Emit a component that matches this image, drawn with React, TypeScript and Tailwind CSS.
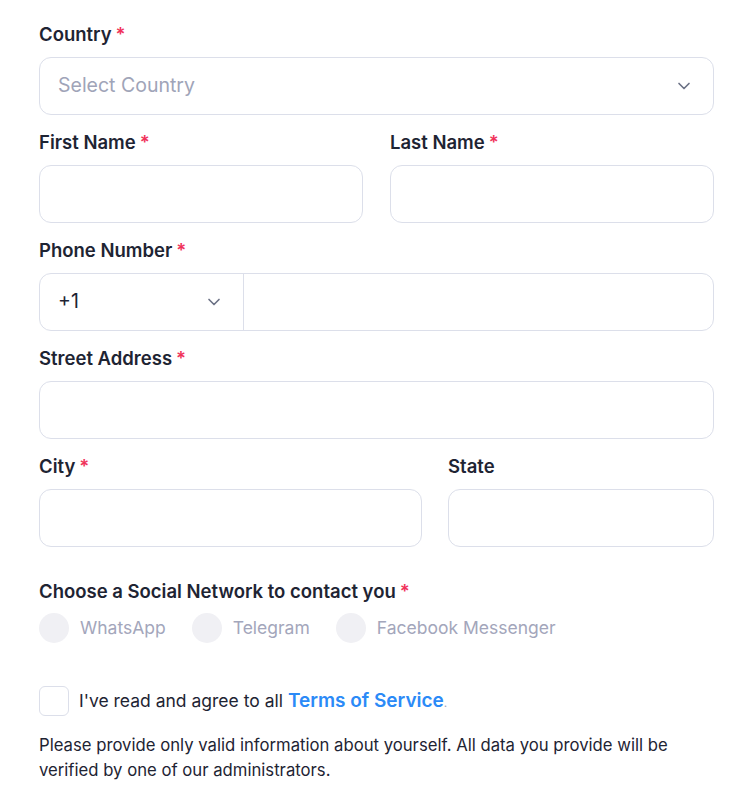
import { ChevronDown } from "lucide-react";

const font = { fontFamily: "Inter, 'Noto Sans', sans-serif" };

function Label({ text, required = true }: { text: string; required?: boolean }) {
  return (
    <div className="mb-[11px] text-[18.5px] leading-6 font-semibold text-[#1e2433]">
      {text}
      {required ? <span className="ml-1 text-[#f0325a]">*</span> : null}
    </div>
  );
}

function Box({ className = "" }: { className?: string }) {
  return <div className={"h-[58px] rounded-xl border border-[#dcdfea] bg-white " + className} />;
}

export default function App() {
  return (
    <div className="bg-white pl-[39px] pr-[34px] pt-[22px] pb-4 text-[#1e2433]" style={font}>
      {/* Country */}
      <div className="mb-[15px]">
        <Label text="Country" />
        <div className="flex h-[58px] items-center justify-between rounded-xl border border-[#dcdfea] pl-[18px] pr-[19px]">
          <span className="text-[19.5px] text-[#a0a4b8]">Select Country</span>
          <ChevronDown className="h-5 w-5 text-[#6b7185]" strokeWidth={2} />
        </div>
      </div>

      {/* Name */}
      <div className="mb-[15px] grid grid-cols-2 gap-[27px]">
        <div>
          <Label text="First Name" />
          <Box />
        </div>
        <div>
          <Label text="Last Name" />
          <Box />
        </div>
      </div>

      {/* Phone */}
      <div className="mb-[15px]">
        <Label text="Phone Number" />
        <div className="flex h-[58px] rounded-xl border border-[#dcdfea]">
          <div className="flex w-[204px] items-center justify-between border-r border-[#dcdfea] pl-[18px] pr-[19px]">
            <span className="text-[19.5px] text-[#1e2433]">+1</span>
            <ChevronDown className="h-5 w-5 text-[#6b7185]" strokeWidth={2} />
          </div>
          <div className="flex-1" />
        </div>
      </div>

      {/* Street */}
      <div className="mb-[15px]">
        <Label text="Street Address" />
        <Box />
      </div>

      {/* City / State */}
      <div className="grid grid-cols-[383px_1fr] gap-[26px]">
        <div>
          <Label text="City" />
          <Box />
        </div>
        <div>
          <Label text="State" required={false} />
          <Box />
        </div>
      </div>

      {/* Social */}
      <div className="mt-[32px]">
        <div className="text-[18.5px] leading-6 font-semibold text-[#1e2433]">
          Choose a Social Network to contact you
          <span className="ml-1 text-[#f0325a]">*</span>
        </div>
        <div className="mt-[10px] flex items-center gap-[26px]">
          {["WhatsApp", "Telegram", "Facebook Messenger"].map((n) => (
            <label key={n} className="flex items-center gap-[11px]">
              <span className="h-[30px] w-[30px] rounded-full bg-[#f0f0f4]" />
              <span className="text-[17.5px] text-[#a3a6bb]">{n}</span>
            </label>
          ))}
        </div>
      </div>

      {/* Terms */}
      <div className="mt-[43px] flex items-center gap-[10px]">
        <span className="h-[30px] w-[30px] rounded-md border border-[#dcdfea]" />
        <span className="text-[17.5px] text-[#1e2433]">
          I've read and agree to all{" "}
          <a href="#" className="text-[19px] font-semibold text-[#2b8af7]">
            Terms of Service
          </a>
          <span className="text-[12px] text-[#a3a6bb]">.</span>
        </span>
      </div>

      <p className="mt-[17px] text-[16.7px] leading-[25px] text-[#1e2433]">
        Please provide only valid information about yourself. All data you provide will be verified by one of our administrators.
      </p>
    </div>
  );
}
